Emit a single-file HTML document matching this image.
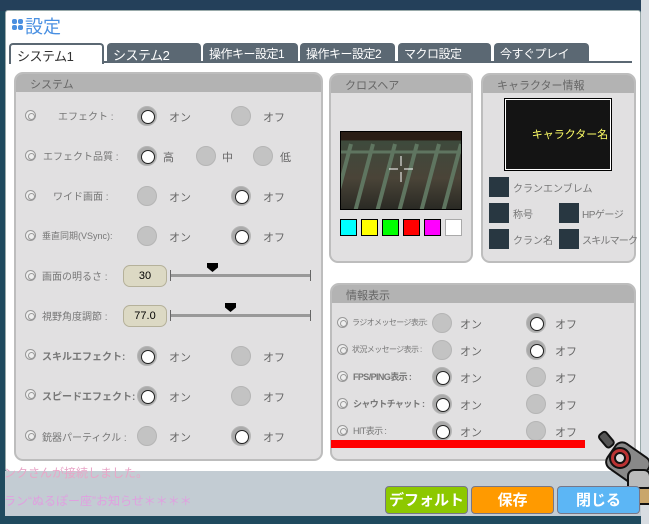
<!DOCTYPE html>
<html><head><meta charset="utf-8"><style>
*{margin:0;padding:0;box-sizing:border-box}
body{width:649px;height:524px;overflow:hidden;background:#1f4a5e;font-family:"Liberation Sans","Noto Sans CJK JP",sans-serif;position:relative}
.a{position:absolute}
.panel{position:absolute;background:#e1e0e1;border:2px solid #bdbdbd;border-radius:9px;overflow:hidden}
.ph{height:18px;background:#b3b3b3;color:#666;font-size:11px;padding:2px 0 0 14px}
.tab{position:absolute;top:43px;height:19px;background:#5b6873;color:#fff;font-size:12px;padding:2px 0 0 6px;border-radius:4px 4px 0 0;letter-spacing:-0.5px;white-space:nowrap}
.sr{position:absolute;width:11px;height:11px;border-radius:50%;border:1px solid #999;background:#eee}
.sr:after{content:"";position:absolute;left:2px;top:2px;width:5px;height:5px;border-radius:50%;border:1px solid #999}
.r{position:absolute;width:20px;height:20px;border-radius:50%;background:#c3c3c3;border:1px solid #b5b5b5}
.r.on{background:#aaa}
.r.on:after{content:"";position:absolute;left:3px;top:3px;width:12px;height:12px;border-radius:50%;background:#fff;border:1px solid #222}
.t{position:absolute;font-size:11px;color:#666}
.l{position:absolute;font-size:10px;color:#777;white-space:nowrap}
.il{position:absolute;font-size:9px;color:#777;letter-spacing:-0.6px;white-space:nowrap}
.sq{position:absolute;width:20px;height:20px;background:#283741}
.btn{position:absolute;top:486px;height:28px;width:83px;border-radius:4px;color:#fff;font-size:15px;font-weight:bold;text-align:center;line-height:27px;border:1px solid #778}
</style></head><body>
<div class="a" style="left:0;top:0;width:649px;height:11px;background:#24405a"></div>
<div class="a" style="left:641px;top:0;width:8px;height:524px;background:#d8dde2"></div>
<div class="a" style="left:5px;top:10px;width:636px;height:462px;background:#fff;border:1px solid #9aa;border-radius:3px"></div>
<div class="a" style="left:5px;top:471px;width:636px;height:45px;background:#c3ccd3"></div>
<div class="a" style="left:4px;top:464px;font-size:12px;color:#e9a6c8">ンクさんが接続しました。</div>
<div class="a" style="left:4px;top:492px;font-size:12px;color:#e0a0e0">ラン“ぬるぽー座”お知らせ＊＊＊＊</div>
<!-- title -->
<div class="a" style="left:12px;top:19px;width:5px;height:5px;background:#4a8fe0;border-radius:2px;box-shadow:6px 0 #4a8fe0,0 6px #4a8fe0,6px 6px #4a8fe0"></div>
<div class="a" style="left:25px;top:13px;font-size:18px;color:#4a90e2">設定</div>
<!-- tabs -->
<div class="a" style="left:104px;top:61px;width:528px;height:2px;background:#5b6873"></div>
<div class="tab" style="left:9px;width:95px;background:#fff;color:#333;border:2px solid #5b6873;border-bottom:none;height:21px;padding-top:1px;font-size:13px">システム1</div>
<div class="tab" style="left:107px;width:94px;font-size:13px">システム2</div>
<div class="tab" style="left:203px;width:95px">操作キー設定1</div>
<div class="tab" style="left:300px;width:95px">操作キー設定2</div>
<div class="tab" style="left:398px;width:93px">マクロ設定</div>
<div class="tab" style="left:494px;width:95px">今すぐプレイ</div>
<!-- system panel -->
<div class="panel" style="left:14px;top:72px;width:309px;height:389px"><div class="ph">システム</div></div>
<div class="sr" style="left:25px;top:110px"></div><div class="l" style="left:58px;top:108px">エフェクト :</div>
<div class="r on" style="left:137px;top:106px"></div><div class="t" style="left:169px;top:109px">オン</div>
<div class="r" style="left:231px;top:106px"></div><div class="t" style="left:263px;top:109px">オフ</div>
<div class="sr" style="left:25px;top:150px"></div><div class="l" style="left:43px;top:148px">エフェクト品質 :</div>
<div class="r on" style="left:137px;top:146px"></div><div class="t" style="left:163px;top:149px">高</div>
<div class="r" style="left:196px;top:146px"></div><div class="t" style="left:222px;top:149px">中</div>
<div class="r" style="left:253px;top:146px"></div><div class="t" style="left:280px;top:149px">低</div>
<div class="sr" style="left:25px;top:190px"></div><div class="l" style="left:53px;top:188px">ワイド画面 :</div>
<div class="r" style="left:137px;top:186px"></div><div class="t" style="left:169px;top:189px">オン</div>
<div class="r on" style="left:231px;top:186px"></div><div class="t" style="left:263px;top:189px">オフ</div>
<div class="sr" style="left:25px;top:230px"></div><div class="l" style="left:42px;top:229px;font-size:9px">垂直同期(VSync):</div>
<div class="r" style="left:137px;top:226px"></div><div class="t" style="left:169px;top:229px">オン</div>
<div class="r on" style="left:231px;top:226px"></div><div class="t" style="left:263px;top:229px">オフ</div>
<div class="sr" style="left:25px;top:270px"></div><div class="l" style="left:42px;top:268px">画面の明るさ :</div>
<div class="a" style="left:123px;top:265px;width:44px;height:22px;background:#dcd9c4;border:1px solid #b5b19a;border-radius:7px;font-size:11px;text-align:center;line-height:20px">30</div>
<div class="a" style="left:171px;top:274px;width:140px;height:3px;background:#999"></div>
<div class="a" style="left:170px;top:270px;width:1px;height:11px;background:#666"></div><div class="a" style="left:310px;top:270px;width:1px;height:11px;background:#666"></div>
<div class="a" style="left:207px;top:263px;width:11px;height:9px;background:#000;clip-path:polygon(0 0,100% 0,100% 50%,50% 100%,0 50%)"></div>
<div class="sr" style="left:25px;top:310px"></div><div class="l" style="left:42px;top:308px">視野角度調節 :</div>
<div class="a" style="left:123px;top:305px;width:44px;height:22px;background:#dcd9c4;border:1px solid #b5b19a;border-radius:7px;font-size:11px;text-align:center;line-height:20px">77.0</div>
<div class="a" style="left:171px;top:314px;width:140px;height:3px;background:#999"></div>
<div class="a" style="left:170px;top:310px;width:1px;height:11px;background:#666"></div><div class="a" style="left:310px;top:310px;width:1px;height:11px;background:#666"></div>
<div class="a" style="left:225px;top:303px;width:11px;height:9px;background:#000;clip-path:polygon(0 0,100% 0,100% 50%,50% 100%,0 50%)"></div>
<div class="sr" style="left:25px;top:349px"></div><div class="l" style="left:42px;top:348px;font-weight:bold">スキルエフェクト:</div>
<div class="r on" style="left:137px;top:346px"></div><div class="t" style="left:169px;top:349px">オン</div>
<div class="r" style="left:231px;top:346px"></div><div class="t" style="left:263px;top:349px">オフ</div>
<div class="sr" style="left:25px;top:389px"></div><div class="l" style="left:42px;top:388px;font-weight:bold">スピードエフェクト:</div>
<div class="r on" style="left:137px;top:386px"></div><div class="t" style="left:169px;top:389px">オン</div>
<div class="r" style="left:231px;top:386px"></div><div class="t" style="left:263px;top:389px">オフ</div>
<div class="sr" style="left:25px;top:430px"></div><div class="l" style="left:42px;top:429px">銃器パーティクル :</div>
<div class="r" style="left:137px;top:426px"></div><div class="t" style="left:169px;top:429px">オン</div>
<div class="r on" style="left:231px;top:426px"></div><div class="t" style="left:263px;top:429px">オフ</div>
<!-- crosshair -->
<div class="panel" style="left:329px;top:73px;width:144px;height:190px"><div class="ph">クロスヘア</div></div>
<div class="a" style="left:340px;top:131px;width:122px;height:79px;border:1px solid #000;background:linear-gradient(180deg,#2a1e16 0,#2a1e16 10%,#3e4a3c 12%,#4a4438 60%,#2a2a24 100%)">
<svg width="120" height="77" style="position:absolute;left:0;top:0"><g stroke="#5f7560" stroke-width="4"><line x1="10" y1="12" x2="-8" y2="80"/><line x1="32" y1="12" x2="14" y2="80"/><line x1="54" y1="12" x2="36" y2="80"/><line x1="76" y1="12" x2="58" y2="80"/><line x1="98" y1="12" x2="80" y2="80"/><line x1="120" y1="12" x2="102" y2="80"/></g><line x1="0" y1="20" x2="120" y2="20" stroke="#5f7560" stroke-width="3"/><g stroke="#fff" stroke-width="1"><line x1="48" y1="37" x2="57" y2="37"/><line x1="63" y1="37" x2="72" y2="37"/><line x1="60" y1="24" x2="60" y2="34"/><line x1="60" y1="40" x2="60" y2="50"/></g></svg></div>
<div class="a" style="left:340px;top:219px;width:17px;height:17px;background:#0ff;border:1px solid #000"></div>
<div class="a" style="left:361px;top:219px;width:17px;height:17px;background:#ff0;border:1px solid #000"></div>
<div class="a" style="left:382px;top:219px;width:17px;height:17px;background:#0f0;border:1px solid #000"></div>
<div class="a" style="left:403px;top:219px;width:17px;height:17px;background:#f00;border:1px solid #000"></div>
<div class="a" style="left:424px;top:219px;width:17px;height:17px;background:#f0f;border:1px solid #000"></div>
<div class="a" style="left:445px;top:219px;width:17px;height:17px;background:#fff;border:1px solid #aaa"></div>
<!-- char info -->
<div class="panel" style="left:481px;top:73px;width:155px;height:190px"><div class="ph">キャラクター情報</div></div>
<div class="a" style="left:505px;top:99px;width:106px;height:71px;background:#141414;border:1px solid #fff;outline:1px solid #000;color:#ff6;font-size:11px;text-align:center;line-height:70px;padding-left:24px;white-space:nowrap">キャラクター名</div>
<div class="sq" style="left:489px;top:177px"></div><div class="l" style="left:513px;top:180px">クランエンブレム</div>
<div class="sq" style="left:489px;top:203px"></div><div class="l" style="left:513px;top:206px">称号</div>
<div class="sq" style="left:559px;top:203px"></div><div class="l" style="left:582px;top:206px;letter-spacing:-0.5px">HPゲージ</div>
<div class="sq" style="left:489px;top:229px"></div><div class="l" style="left:513px;top:232px">クラン名</div>
<div class="sq" style="left:559px;top:229px"></div><div class="l" style="left:582px;top:232px;letter-spacing:-0.8px">スキルマーク</div>
<!-- info -->
<div class="panel" style="left:330px;top:283px;width:306px;height:178px"><div class="ph">情報表示</div></div>
<div class="sr" style="left:337px;top:317px"></div><div class="il" style="left:352px;top:317px;font-size:8px">ラジオメッセージ表示:</div>
<div class="r" style="left:432px;top:313px"></div><div class="t" style="left:460px;top:316px">オン</div>
<div class="r on" style="left:526px;top:313px"></div><div class="t" style="left:555px;top:316px">オフ</div>
<div class="sr" style="left:337px;top:344px"></div><div class="il" style="left:352px;top:344px;font-size:8px">状況メッセージ表示 :</div>
<div class="r" style="left:432px;top:340px"></div><div class="t" style="left:460px;top:343px">オン</div>
<div class="r on" style="left:526px;top:340px"></div><div class="t" style="left:555px;top:343px">オフ</div>
<div class="sr" style="left:337px;top:371px"></div><div class="il" style="left:353px;top:370px;font-weight:bold">FPS/PING表示 :</div>
<div class="r on" style="left:432px;top:367px"></div><div class="t" style="left:460px;top:370px">オン</div>
<div class="r" style="left:526px;top:367px"></div><div class="t" style="left:555px;top:370px">オフ</div>
<div class="sr" style="left:337px;top:398px"></div><div class="il" style="left:353px;top:397px;font-weight:bold">シャウトチャット :</div>
<div class="r on" style="left:432px;top:394px"></div><div class="t" style="left:460px;top:397px">オン</div>
<div class="r" style="left:526px;top:394px"></div><div class="t" style="left:555px;top:397px">オフ</div>
<div class="sr" style="left:337px;top:425px"></div><div class="il" style="left:353px;top:424px">HIT表示 :</div>
<div class="r on" style="left:432px;top:421px"></div><div class="t" style="left:460px;top:424px">オン</div>
<div class="r" style="left:526px;top:421px"></div><div class="t" style="left:555px;top:424px">オフ</div>
<div class="a" style="left:331px;top:440px;width:254px;height:8px;background:#f00"></div>
<!-- weapon -->
<svg class="a" style="left:598px;top:428px" width="51" height="90"><g stroke="#111" stroke-width="2"><rect x="4" y="4" width="9" height="16" rx="3" fill="#555" transform="rotate(-40 8 12)"/><rect x="10" y="20" width="40" height="30" rx="8" fill="#888" transform="rotate(35 30 35)"/><circle cx="22" cy="30" r="10" fill="#b33"/><circle cx="22" cy="30" r="5" fill="#ddd"/><rect x="30" y="42" width="22" height="22" rx="6" fill="#bbb"/><rect x="36" y="60" width="16" height="16" fill="#c9a66b"/></g></svg>
<!-- buttons -->
<div class="btn" style="left:385px;background:#8dc800">デフォルト</div>
<div class="btn" style="left:471px;background:#ff9a00">保存</div>
<div class="btn" style="left:557px;background:#5cb6f5">閉じる</div>
</body></html>
